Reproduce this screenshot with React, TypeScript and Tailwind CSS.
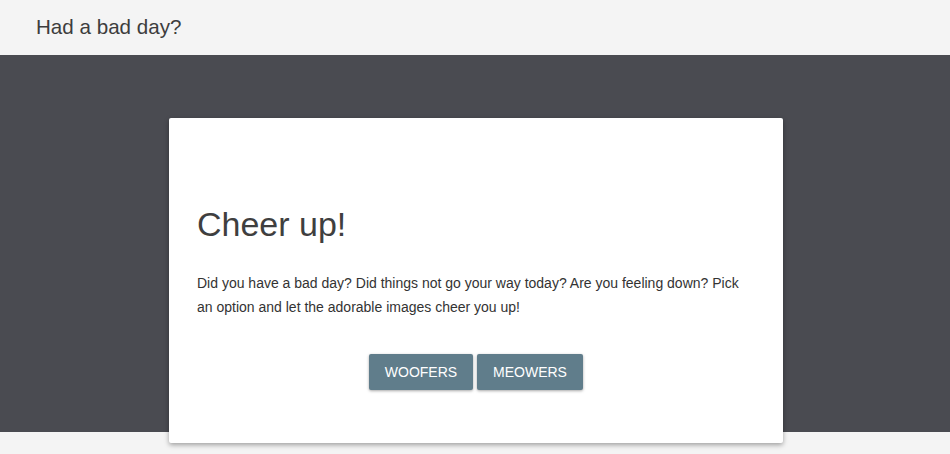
export default function App() {
  return (
    <div className="min-h-[454px] bg-[#f4f4f4] font-['Liberation_Sans',Arial,sans-serif]">
      {/* Top bar */}
      <header className="flex h-[55px] items-center bg-[#f4f4f4] px-9">
        <h1 className="text-[20.6px] leading-none text-[#3d3d3d]">Had a bad day?</h1>
      </header>

      {/* Dark hero with overlapping card */}
      <section className="flex h-[377px] justify-center bg-[#4a4b51] pl-[2px] pt-[63px]">
        <div className="relative z-10 h-[325px] w-[614px] rounded-[2px] bg-white px-7 pt-[86px] shadow-[0_2px_5px_rgba(0,0,0,0.35)]">
          <h2 className="text-[34px] leading-[40px] text-[#3f3f3f]">Cheer up!</h2>
          <p className="mt-[27px] text-[14px] leading-[24px] text-[#333]">
            Did you have a bad day? Did things not go your way today? Are you feeling down? Pick an
            option and let the adorable images cheer you up!
          </p>
          <div className="mt-[35px] flex justify-center gap-1">
            <button className="h-9 w-[104px] rounded-[2px] bg-[#607d8b] text-[14px] text-white shadow-[0_1px_3px_rgba(0,0,0,0.35)]">
              WOOFERS
            </button>
            <button className="h-9 w-[106px] rounded-[2px] bg-[#607d8b] text-[14px] text-white shadow-[0_1px_3px_rgba(0,0,0,0.35)]">
              MEOWERS
            </button>
          </div>
        </div>
      </section>
    </div>
  );
}
